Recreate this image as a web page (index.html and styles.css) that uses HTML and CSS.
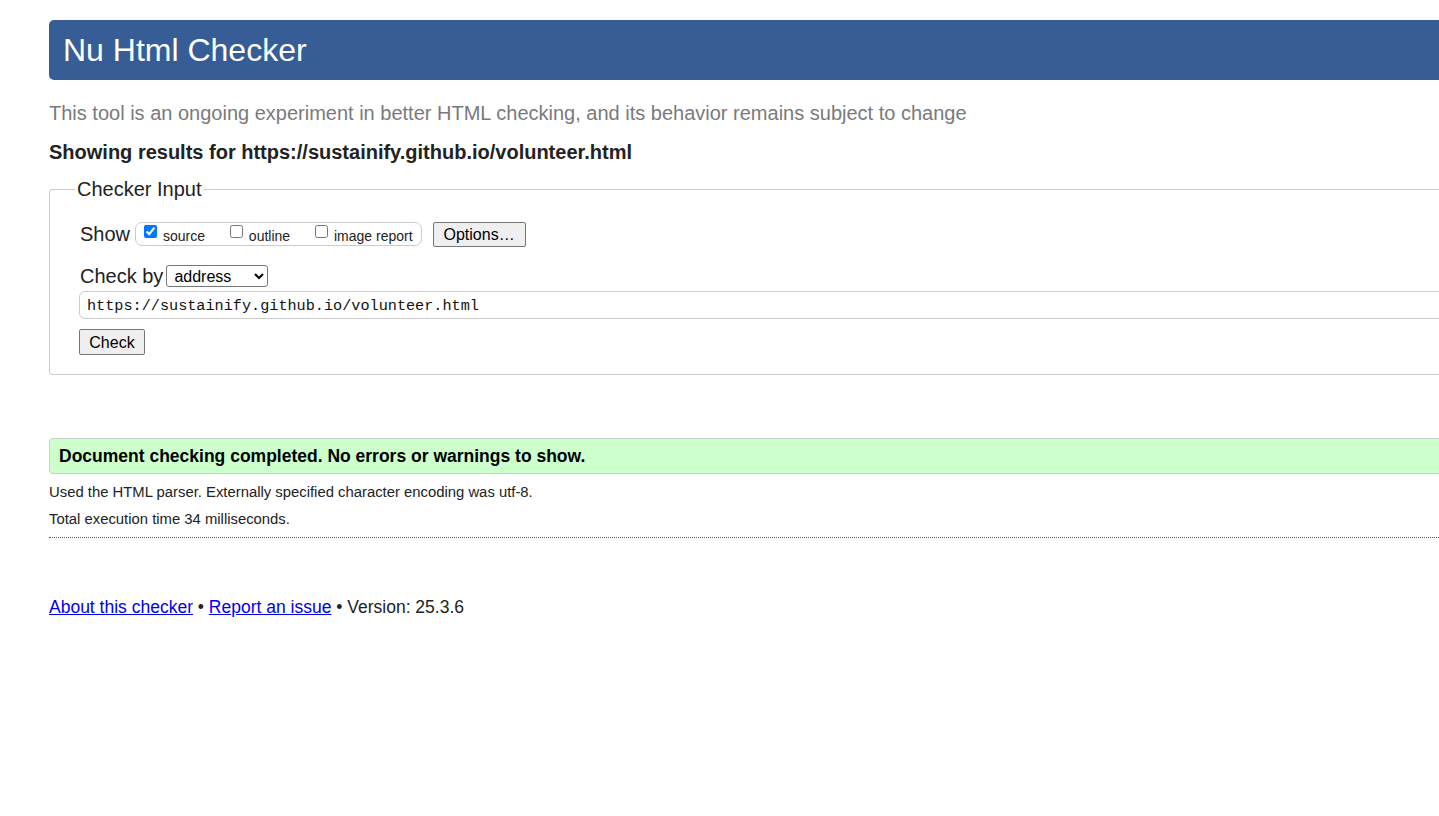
FILE: index.html
```html
<!DOCTYPE html>
<html lang="en">
<head>
<meta charset="utf-8">
<title>Showing results for https://sustainify.github.io/volunteer.html - Nu Html Checker</title>
<link rel="stylesheet" href="styles.css">
</head>
<body>
<div class="page">
  <h1 class="title">Nu Html Checker</h1>
  <p class="intro">This tool is an ongoing experiment in better HTML checking, and its behavior remains subject to change</p>
  <p class="showing">Showing results for https://sustainify.github.io/volunteer.html</p>
  <form class="checker">
    <fieldset class="checker-box">
      <legend class="checker-legend">Checker Input</legend>
      <div class="row row-show">
        <span class="label">Show</span>
        <span class="show-group">
          <label class="opt"><input type="checkbox" checked> source</label>
          <label class="opt"><input type="checkbox"> outline</label>
          <label class="opt"><input type="checkbox"> image report</label>
        </span>
        <button type="button" class="btn btn-options">Options…</button>
      </div>
      <div class="row row-by">
        <span class="label">Check by</span>
        <select class="by-select"><option>address</option></select>
      </div>
      <div class="row row-url">
        <input class="url" type="text" value="https://sustainify.github.io/volunteer.html">
      </div>
      <div class="row row-submit">
        <button type="button" class="btn btn-check">Check</button>
      </div>
    </fieldset>
  </form>
  <p class="success">Document checking completed. No errors or warnings to show.</p>
  <p class="details">Used the HTML parser. Externally specified character encoding was utf-8.</p>
  <p class="details">Total execution time 34 milliseconds.</p>
  <hr class="sep">
  <p class="footer"><a href="#">About this checker</a> • <a href="#">Report an issue</a> • Version: 25.3.6</p>
</div>
</body>
</html>
```

FILE: styles.css
```css
html, body {
  margin: 0;
  padding: 0;
  background: #fff;
  overflow: hidden;
}
body {
  font-family: "Liberation Sans", Arial, sans-serif;
  color: #222;
  padding-left: 49px;
}
.page {
  width: 1440px;
  padding-top: 20px;
}
.title {
  margin: 0;
  height: 60px;
  line-height: 60px;
  padding: 0 14px;
  font-size: 32px;
  font-weight: normal;
  color: #fff;
  background: #365d95;
  border-radius: 5px 0 0 5px;
}
.intro {
  margin: 21px 0 0;
  font-size: 20px;
  line-height: 24px;
  color: #7a7a7a;
}
.showing {
  margin: 15px 0 0;
  font-size: 20px;
  line-height: 24px;
  font-weight: bold;
  color: #222;
}
.checker {
  margin: 13px 0 0;
}
.checker-box {
  margin: 0;
  padding: 20px 0 19px 30px;
  border: 1px solid #ccc;
  border-radius: 3px;
  min-width: 0;
}
.checker-legend {
  font-size: 20px;
  line-height: 24px;
  padding: 0 2px;
  margin-left: -5px;
  color: #222;
}
.row {
  display: flex;
  align-items: center;
}
.label {
  font-size: 20px;
  line-height: 24px;
}
.row-show {
  height: 26px;
}
.show-group {
  display: inline-flex;
  align-items: center;
  height: 22px;
  margin-left: 5px;
  padding: 0 8px 0 7px;
  border: 1px solid #ccc;
  border-radius: 7px;
  font-size: 14px;
}
.opt {
  display: inline-flex;
  align-items: center;
  margin-right: 24px;
  white-space: pre;
  line-height: 16px;
  padding-top: 3px;
}
.opt:last-child {
  margin-right: 0;
}
.opt input {
  width: 13px;
  height: 13px;
  margin: 0 2px 0 1px;
  position: relative;
  top: -4px;
  accent-color: #0075ff;
}
.btn {
  font-family: "Liberation Sans", Arial, sans-serif;
  font-size: 16px;
  color: #000;
  background: #efefef;
  border: 1px solid #767676;
  border-radius: 2px;
  padding: 0 6px;
  height: 25px;
  line-height: 21px;
}
.btn-options {
  margin-left: 11px;
  width: 93px;
  padding: 0;
}
.row-by {
  height: 24px;
  margin-top: 17px;
}
.by-select {
  margin-left: 3px;
  width: 102px;
  height: 22px;
  font-family: "Liberation Sans", Arial, sans-serif;
  font-size: 16px;
  color: #000;
  background: #fff;
  border: 1px solid #767676;
  border-radius: 3px;
  padding: 0 0 0 3px;
}
.row-url {
  margin-top: 3px;
  margin-left: -1px;
}
.url {
  width: 100%;
  height: 28px;
  box-sizing: border-box;
  border: 1px solid #ccc;
  border-radius: 6px 0 0 6px;
  padding: 1px 7px 0;
  font-family: "Liberation Mono", "DejaVu Sans Mono", monospace;
  font-size: 15.2px;
  color: #111;
  background: #fff;
}
.row-submit {
  margin-top: 10px;
  margin-left: -1px;
}
.btn-check {
  width: 66px;
  height: 26px;
  padding: 0;
}
.success {
  margin: 63px 0 0;
  height: 34px;
  line-height: 34px;
  padding: 0 9px;
  background: #ccffcc;
  border: 1px solid #c6d6c6;
  border-radius: 4px 0 0 4px;
  font-size: 17.5px;
  font-weight: bold;
  color: #000;
}
.details {
  margin: 8px 0 0;
  font-size: 14.85px;
  line-height: 20px;
  color: #222;
}
.details + .details {
  margin-top: 7px;
}
.sep {
  margin: 8px 0 0;
  border: 0;
  border-top: 1px dotted #555;
  height: 0;
}
.footer {
  margin: 58px 0 0;
  font-size: 17.5px;
  line-height: 22px;
  color: #222;
}
.footer a {
  color: #0000ee;
  text-decoration: underline;
}
```
